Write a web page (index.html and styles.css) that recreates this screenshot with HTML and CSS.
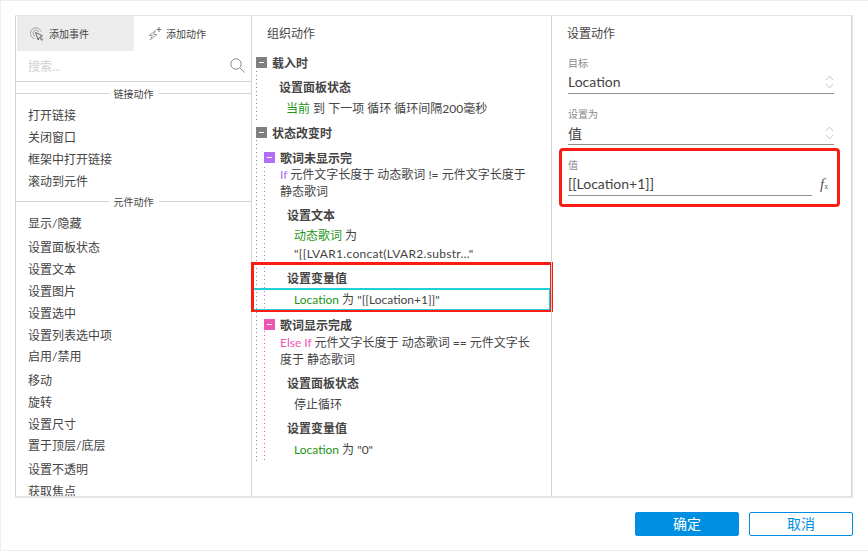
FILE: index.html
```html
<!DOCTYPE html>
<html lang="zh">
<head>
<meta charset="utf-8">
<title>用例编辑</title>
<link rel="stylesheet" href="styles.css">
</head>
<body>
<div class="dialog">
  <div class="panels">
    <section class="col-left">
      <div class="tabs">
        <div class="tab tab-active">
          <svg class="tab-icon" width="14" height="14" viewBox="0 0 14 14" fill="none" stroke="#a0a0a0" stroke-width="1"><path d="M4.5 11.5A5.4 5.4 0 1 1 11 4.5"/><path d="M5.2 9A3 3 0 1 1 9 5.2"/><path d="M5.5 5.5l7 3.2-2.4 1 2.6 2.8-.9.9-2.6-2.8-1 2.4z" fill="#ececec" stroke="#666"/></svg>
          <span>添加事件</span>
        </div>
        <div class="tab">
          <svg class="tab-icon" width="14" height="14" viewBox="0 0 14 14" fill="none" stroke="#a0a0a0" stroke-width="1"><path d="M7.5 3.5L1 8.5h3.5L2 13l7-5.5H5.5z"/><path d="M11 0v5M8.5 2.5h5" stroke="#777"/></svg>
          <span>添加动作</span>
        </div>
      </div>
      <div class="search">
        <span class="search-text">搜索...</span>
        <svg width="15" height="15" viewBox="0 0 15 15" fill="none" stroke="#8f8f8f" stroke-width="1"><circle cx="6" cy="6" r="5.2"/><path d="M9.8 9.8L14.6 14.6"/></svg>
      </div>
      <div class="group-head"><span>链接动作</span></div>
      <ul class="actions">
        <li>打开链接</li>
        <li>关闭窗口</li>
        <li>框架中打开链接</li>
        <li>滚动到元件</li>
      </ul>
      <div class="group-head group-head-2"><span>元件动作</span></div>
      <ul class="actions actions-2">
        <li>显示/隐藏</li>
        <li class="gap">设置面板状态</li>
        <li>设置文本</li>
        <li>设置图片</li>
        <li>设置选中</li>
        <li>设置列表选中项</li>
        <li class="tight">启用/禁用</li>
        <li class="gap">移动</li>
        <li>旋转</li>
        <li>设置尺寸</li>
        <li class="tight">置于顶层/底层</li>
        <li class="gap">设置不透明</li>
        <li>获取焦点</li>
      </ul>
    </section>

    <section class="col-mid">
      <h2 class="col-title">组织动作</h2>
      <div class="tree">
        <span class="dots dots-a"></span>
        <span class="dots dots-b"></span>
        <span class="dots dots-c"></span>
        <span class="dots dots-d"></span>
        <div class="ev"><i class="tog tog-grey"></i><b>载入时</b></div>
        <div class="act act-a">设置面板状态</div>
        <div class="det det-a"><em class="g">当前</em> 到 下一项 循环 循环间隔200毫秒</div>
        <div class="ev ev-2"><i class="tog tog-grey"></i><b>状态改变时</b></div>
        <div class="case"><i class="tog tog-purple"></i><b>歌词未显示完</b></div>
        <div class="cond"><em class="p">If</em> 元件文字长度于 动态歌词 != 元件文字长度于 静态歌词</div>
        <div class="act act-b">设置文本</div>
        <div class="det det-b"><em class="g">动态歌词</em> 为<br><span class="lvar">"[[LVAR1.concat(LVAR2.substr..."</span></div>
        <div class="act act-b">设置变量值</div>
        <div class="det det-b det-sel"><em class="g">Location</em> 为 "[[Location+1]]"</div>
        <div class="case case-2"><i class="tog tog-pink"></i><b>歌词显示完成</b></div>
        <div class="cond cond-2"><em class="k">Else If</em> 元件文字长度于 动态歌词 == 元件文字长度于 静态歌词</div>
        <div class="act act-b">设置面板状态</div>
        <div class="det det-b det-low">停止循环</div>
        <div class="act act-b act-up">设置变量值</div>
        <div class="det det-b det-low"><em class="g">Location</em> 为 "0"</div>
      </div>
      <div class="mark mark-mid"></div>
    </section>

    <section class="col-right">
      <h2 class="col-title">设置动作</h2>
      <div class="field">
        <label>目标</label>
        <div class="select"><span>Location</span>
          <svg width="9" height="14" viewBox="0 0 9 14" fill="none" stroke="#c8c8c8" stroke-width="1"><path d="M1 5l3.5-4L8 5M1 9l3.5 4L8 9"/></svg>
        </div>
      </div>
      <div class="field">
        <label>设置为</label>
        <div class="select"><span>值</span>
          <svg width="9" height="14" viewBox="0 0 9 14" fill="none" stroke="#c8c8c8" stroke-width="1"><path d="M1 5l3.5-4L8 5M1 9l3.5 4L8 9"/></svg>
        </div>
      </div>
      <div class="field">
        <label>值</label>
        <div class="value-row">
          <div class="value">[[Location+1]]</div>
          <span class="fx"><i>f</i><small>x</small></span>
        </div>
      </div>
      <div class="mark mark-right"></div>
    </section>
  </div>
  <div class="footer">
    <button class="btn btn-primary">确定</button>
    <button class="btn btn-ghost">取消</button>
  </div>
</div>
</body>
</html>
```
FILE: styles.css
```css
* { box-sizing: border-box; }
html, body { margin: 0; padding: 0; }
body {
  width: 868px;
  height: 551px;
  overflow: hidden;
  background: #fff;
  color: #333;
  font-family: "Lato", "Noto Sans CJK SC", sans-serif;
  font-size: 12px;
}
.dialog {
  width: 868px;
  height: 551px;
  padding: 15px 15px 0 15px;
  border: 1px solid #eeeeee;
  border-right: 0;
  display: flex;
  flex-direction: column;
}
.panels {
  margin: -1px 0 0 -1px;
  width: 838px;
  height: 483px;
  display: flex;
  border: 1px solid #e4e4e4;
  border-bottom: 2px solid #e4e4e4;
  flex: none;
}
.col-left {
  width: 236px;
  flex: none;
  height: 100%;
  overflow: hidden;
  border-left: 1px solid #d4d4d4;
  margin-left: -1px;
}
.col-mid {
  width: 300px;
  flex: none;
  border-left: 1px solid #d4d4d4;
  position: relative;
}
.col-right {
  flex: 1;
  border-left: 1px solid #d4d4d4;
  border-right: 1px solid #d4d4d4;
  padding-left: 16px;
  position: relative;
}

/* left column */
.tabs { display: flex; height: 35px; }
.tab {
  width: 117px;
  padding-left: 13px;
  display: flex;
  align-items: center;
  gap: 5px;
  font-size: 10px;
  color: #444;
}
.tab + .tab { padding-left: 14px; gap: 4px; }
.tab-active { background: #ececec; margin-left: 1px; }
.tab-icon { flex: none; }
.search {
  height: 31px;
  padding: 0 6px 2px 12px;
  display: flex;
  align-items: center;
  justify-content: space-between;
  border-bottom: 1px solid #d4d4d4;
}
.search-text { color: #d0d0d0; font-size: 12px; }
.group-head {
  height: 12px;
  font-size: 10px;
  position: relative;
  display: flex;
  align-items: flex-end;
  justify-content: center;
}
.group-head::before {
  content: "";
  position: absolute;
  left: 0;
  right: 0;
  bottom: 0;
  border-bottom: 1px solid #d4d4d4;
}
.group-head span {
  background: #fff;
  padding: 0 5px;
  position: relative;
  line-height: 12px;
  height: 12px;
  transform: translateY(6px);
  color: #444;
}
.actions {
  list-style: none;
  margin: 0;
  padding: 11px 0 0 12px;
  color: #444;
}
.actions li { height: 22px; line-height: 22px; }
.actions-2 { padding-top: 11px; }
.group-head-2 { margin-top: 4px; height: 5px; }
.actions li.gap { margin-top: 2px; }
.actions li.tight { margin-top: -1px; }

/* shared */
.col-title {
  margin: 0;
  font-size: 12px;
  font-weight: 400;
  line-height: 16px;
  padding-top: 10px;
  color: #444;
}
.col-mid .col-title { padding-left: 15px; }
.col-right .col-title { margin-left: -1px; }

/* tree */
.tree { position: relative; padding-top: 12px; height: 440px; }
.tree b { font-weight: 700; color: #444; }
.tree em { font-style: normal; }
.g { color: #1e9418; }
.p { color: #b26ef5; }
.k { color: #ee55b5; }
.ev, .case {
  display: flex;
  align-items: center;
  height: 17px;
  gap: 5px;
  padding-left: 4px;
}
.case { padding-left: 12px; margin-top: 8px; }
.ev-2 { margin-top: 6px; }
.case-2 { margin-top: 6px; }
.tog {
  width: 11px;
  height: 11px;
  flex: none;
  position: relative;
  display: block;
}
.tog::after {
  content: "";
  position: absolute;
  left: 3px;
  right: 3px;
  top: 5px;
  height: 1px;
  background: #fff;
}
.tog-grey { background: #7f7f7f; }
.tog-purple { background: #b26ef5; }
.tog-pink { background: #ee55b5; }
.act { font-weight: 700; line-height: 17px; height: 17px; color: #444; }
.act-a { padding-left: 27px; margin-top: 8px; }
.act-b { padding-left: 35px; margin-top: 7px; }
.act-up { margin-top: 6px; }
.det { line-height: 18px; color: #444; }
.det-a { padding-left: 34px; margin-top: 4px; height: 18px; }
.det-b { padding-left: 42px; margin-top: 3px; }
.det-low { margin-top: 4px; }
.lvar { letter-spacing: 0.3px; }
.cond { padding: 0 14px 0 28px; line-height: 17px; color: #444; }
.cond-2 { margin-top: 1px; }
.det-sel {
  border: 1px solid #1fd1d6;
  border-top-width: 2px;
  height: 22px;
  padding-left: 40px;
  margin: 1px 1px 0 1px;
  line-height: 19px;
}
.dots {
  position: absolute;
  width: 1px;
  background-image: linear-gradient(var(--dot) 1px, transparent 1px);
  background-size: 1px 4px;
}
.dots-a { --dot: #888; left: 4px; top: 29px; height: 50px; }
.dots-b { --dot: #888; left: 4px; top: 98px; height: 322px; }
.dots-c { --dot: #b26ef5; left: 12px; top: 125px; height: 142px; }
.dots-d { --dot: #ee55b5; left: 12px; top: 289px; height: 130px; }

/* red marks */
.mark { position: absolute; border: 3px solid #fb1d14; }
.mark-mid { left: -1px; top: 246px; width: 302px; height: 50px; border-bottom-width: 2px; }
.mark-right { left: 7px; top: 132px; width: 281px; height: 59px; border-radius: 4px; }

/* right */
.field { margin-top: 13px; }
.col-title + .field { margin-top: 14px; }
.field label {
  display: block;
  font-size: 10px;
  line-height: 14px;
  color: #8a8a8a;
}
.select {
  width: 266px;
  height: 24px;
  border-bottom: 1px solid #8f8f8f;
  display: flex;
  align-items: center;
  justify-content: space-between;
  font-size: 14px;
  color: #444;
}
.value-row { display: flex; align-items: center; gap: 7px; }
.value {
  width: 244px;
  height: 24px;
  border-bottom: 1px solid #8f8f8f;
  font-size: 14px;
  line-height: 24px;
  color: #444;
}
.fx {
  color: #555;
  font-family: "Liberation Serif", serif;
  font-size: 15px;
  line-height: 14px;
  margin: 3px 0 0 1px;
}
.fx small { font-size: 8px; }

/* footer */
.footer {
  display: flex;
  justify-content: flex-end;
  gap: 10px;
  padding: 14px 0 0 0;
}
.btn {
  width: 104px;
  height: 24px;
  border-radius: 2px;
  font-family: inherit;
  font-size: 14px;
  line-height: 20px;
  padding: 0;
  border: 1px solid #008fe0;
}
.btn-primary { background: #008fe0; color: #fff; }
.btn-ghost { background: #fff; color: #008fe0; }
```
